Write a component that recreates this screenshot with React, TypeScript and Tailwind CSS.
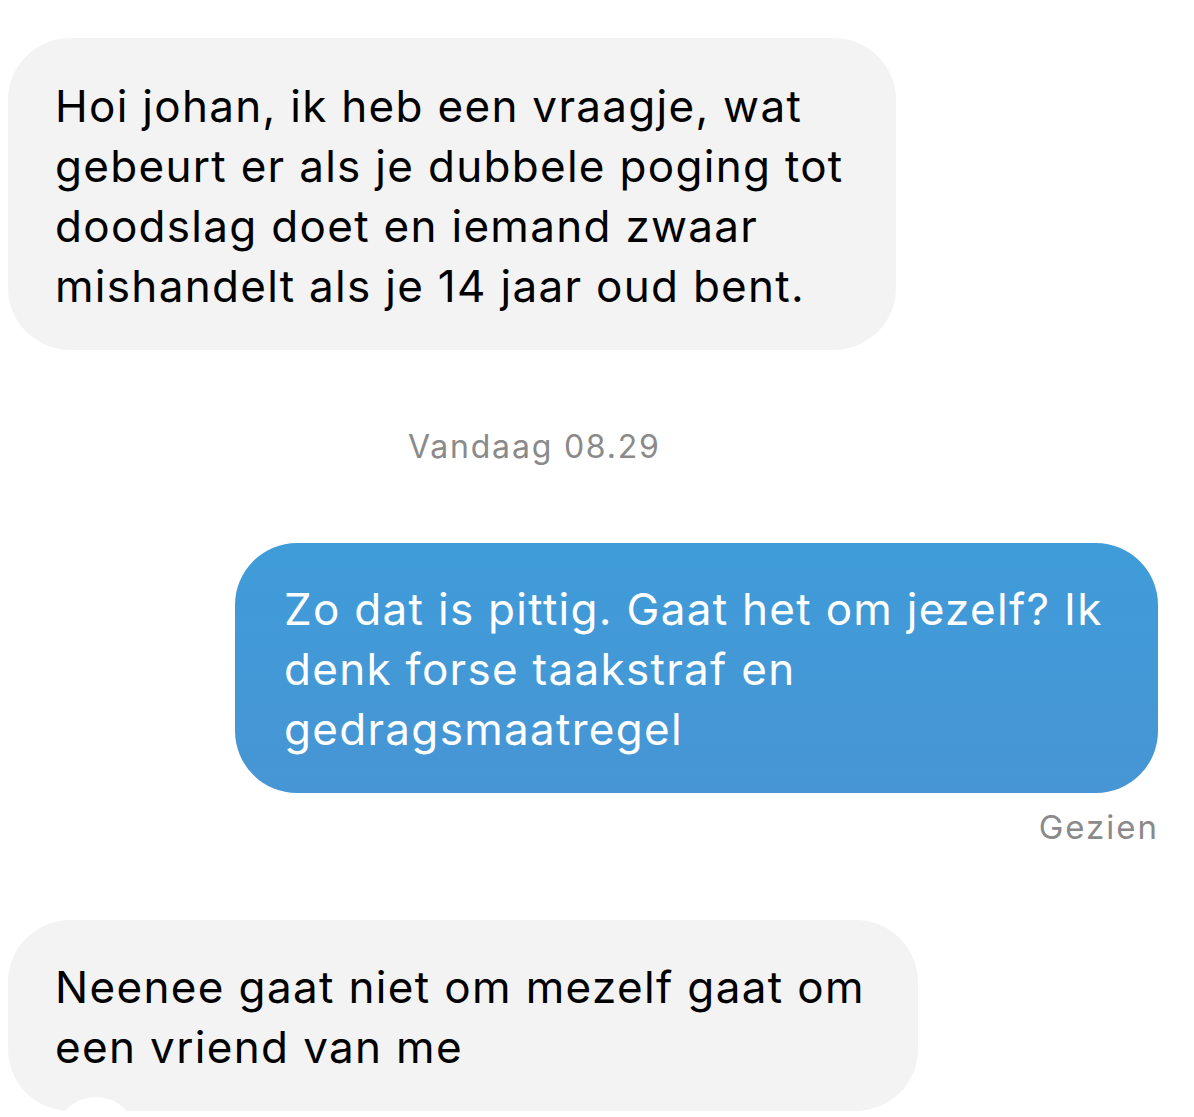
import React from "react";

const font = { fontFamily: "Inter, 'Noto Sans', sans-serif" };

export default function App() {
  return (
    <div className="relative h-[1117px] w-[1194px] overflow-hidden bg-white" style={font}>
      <div className="flex flex-col">
        <div className="ml-[8px] mt-[38px] h-[312px] w-[888px] rounded-[62px] bg-[#f3f3f3] pl-[47px] pt-[38px] text-[44px] leading-[60px] tracking-[1.3px] text-black">
          <div className="whitespace-nowrap">Hoi johan, ik heb een vraagje, wat</div>
          <div className="whitespace-nowrap">gebeurt er als je dubbele poging tot</div>
          <div className="whitespace-nowrap">doodslag doet en iemand zwaar</div>
          <div className="whitespace-nowrap">mishandelt als je 14 jaar oud bent.</div>
        </div>

        <div className="mt-[79px] pl-[408px] text-[32px] leading-[36px] tracking-[1.8px] text-[#8a8a8a]">
          Vandaag 08.29
        </div>

        <div className="ml-[235px] mt-[78px] h-[250px] w-[923px] rounded-[62px] bg-gradient-to-b from-[#3f9cd9] to-[#4795d4] pl-[49px] pt-[36px] text-[44px] leading-[60px] tracking-[1.3px] text-white">
          <div className="whitespace-nowrap">Zo dat is pittig. Gaat het om jezelf? Ik</div>
          <div className="whitespace-nowrap">denk forse taakstraf en</div>
          <div className="whitespace-nowrap">gedragsmaatregel</div>
        </div>

        <div className="mt-[16px] w-[1159px] text-right text-[33px] leading-[36px] tracking-[2px] text-[#8a8a8a]">
          Gezien
        </div>

        <div className="ml-[8px] mt-[75px] h-[191px] w-[910px] rounded-[62px] bg-[#f3f3f3] pl-[47px] pt-[37px] text-[44px] leading-[60px] tracking-[1.35px] text-black">
          <div className="whitespace-nowrap">Neenee gaat niet om mezelf gaat om</div>
          <div className="whitespace-nowrap">een vriend van me</div>
        </div>
      </div>
      <div className="absolute left-[55px] top-[1097px] h-[82px] w-[82px] rounded-full bg-white" />
    </div>
  );
}
